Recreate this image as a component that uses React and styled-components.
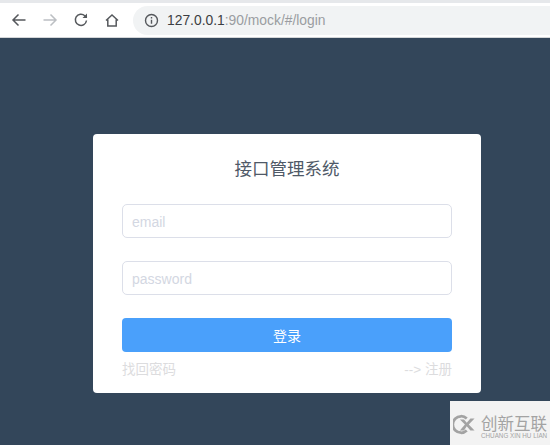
import React from "react";
import styled, { createGlobalStyle } from "styled-components";

const Global = createGlobalStyle`
  html, body { margin: 0; padding: 0; width: 550px; height: 445px; overflow: hidden; background: #34495e; }
  body { font-family: "Liberation Sans", "Noto Sans CJK SC", sans-serif; }
  * { box-sizing: border-box; }
`;

const Page = styled.div`
  position: relative;
  width: 550px;
  height: 445px;
  display: flex;
  flex-direction: column;
  background: #33465a;
`;

const Toolbar = styled.header`
  height: 38px;
  flex: none;
  display: flex;
  align-items: center;
  background: #fff;
  border-top: 3px solid #e6e8eb;
  border-bottom: 1px solid #d4d6d8;
  padding: 0 0 0 11px;
`;

const NavIcon = styled.svg`
  width: 16px;
  height: 16px;
  flex: none;
  margin-right: ${(p) => p.$gap}px;
  fill: none;
  stroke: ${(p) => p.$color};
  stroke-width: 1.5;
`;

const Omnibox = styled.div`
  width: 417px;
  height: 29px;
  flex: none;
  margin-left: 13px;
  border-radius: 15px 0 0 15px;
  background: #f1f3f4;
  display: flex;
  align-items: center;
  padding-left: 11px;
  gap: 8px;
  font-size: 13.85px;
`;

const InfoIcon = styled.svg`
  width: 15px;
  height: 15px;
  flex: none;
  fill: none;
  stroke: #55585c;
  stroke-width: 1.4;
`;

const Url = styled.span`
  color: #9a9da1;
`;

const Host = styled.span`
  color: #3b3e42;
`;

const Main = styled.main`
  flex: 1;
  padding: 96px 0 0 93px;
`;

const Card = styled.section`
  width: 388px;
  height: 259px;
  background: #fff;
  border-radius: 4px;
  padding: 25px 29px 0;
  display: flex;
  flex-direction: column;
`;

const Title = styled.h1`
  margin: 0 0 24px;
  height: 21px;
  font-size: 17.5px;
  line-height: 21px;
  font-weight: 400;
  text-align: center;
  color: #4f5967;
`;

const Field = styled.input`
  display: block;
  width: 100%;
  height: 34px;
  flex: none;
  margin-bottom: ${(p) => p.$gap}px;
  padding: 1px 9px 0;
  border: 1.5px solid #dcdfe9;
  border-radius: 5px;
  background: #fff;
  font: 14px "Liberation Sans", sans-serif;
  outline: none;
  &::placeholder { color: #d3d7e2; opacity: 1; }
`;

const Submit = styled.button`
  width: 100%;
  height: 34px;
  flex: none;
  border: 0;
  border-radius: 4px;
  background: #4aa0fb;
  color: #fff;
  font: 14px "Liberation Sans", "Noto Sans CJK SC", sans-serif;
`;

const Links = styled.div`
  display: flex;
  justify-content: space-between;
  margin-top: 8px;
  font-size: 13.5px;
  line-height: 19px;
  color: #dcdcde;
`;

const Watermark = styled.aside`
  position: absolute;
  left: 450px;
  top: 401px;
  width: 100px;
  height: 44px;
  background: #f3f3f3;
  display: flex;
  align-items: center;
  padding: 7px 0 0 3px;
  gap: 6px;
`;

const MarkIcon = styled.svg`
  width: 22px;
  height: 21px;
  flex: none;
  margin-top: -5px;
`;

const MarkText = styled.div`
  display: flex;
  flex-direction: column;
  color: #a3a3a3;
`;

const MarkCn = styled.span`
  font-size: 16.500px;
  line-height: 18px;
  white-space: nowrap;
`;

const MarkEn = styled.span`
  font-size: 6.300px;
  line-height: 6px;
  white-space: nowrap;
`;

export default function App() {
  return (
    <Page>
      <Global />
      <Toolbar>
        <NavIcon $gap={15} $color="#55585c" viewBox="0 0 16 16">
          <path d="M14.500 8H2M7.500 2.500 2 8l5.500 5.500" />
        </NavIcon>
        <NavIcon $gap={15} $color="#bcbfc3" viewBox="0 0 16 16">
          <path d="M1.500 8H14M8.500 2.500 14 8l-5.500 5.500" />
        </NavIcon>
        <NavIcon $gap={15} $color="#55585c" viewBox="0 0 16 16">
          <path d="M13.500 8.500A5.600 5.600 0 1 1 11.800 3.700L13.800 5.500" />
          <path d="M14 1.500v4.500H9.500" fill="#55585c" stroke="none" />
        </NavIcon>
        <NavIcon $gap={0} $color="#55585c" viewBox="0 0 16 16">
          <path d="M2 8.500 8 3l6 5.500M3.800 7.500V14h8.400V7.500" />
        </NavIcon>
        <Omnibox>
          <InfoIcon viewBox="0 0 15 15">
            <circle cx="7.500" cy="7.500" r="6" />
            <path d="M7.500 6.700v4M7.500 4v1.500" />
          </InfoIcon>
          <Url>
            <Host>127.0.0.1</Host>:90/mock/#/login
          </Url>
        </Omnibox>
      </Toolbar>
      <Main>
        <Card>
          <Title>接口管理系统</Title>
          <Field $gap={23} placeholder="email" />
          <Field $gap={23} placeholder="password" />
          <Submit>登录</Submit>
          <Links>
            <span>找回密码</span>
            <span>--&gt; 注册</span>
          </Links>
        </Card>
      </Main>
      <Watermark>
        <MarkIcon viewBox="0 0 24 22">
          <path d="M15 4.500A9 9 0 1 0 15 17.500" fill="none" stroke="#a3a3a3" strokeWidth="3" />
          <path d="M7.500 5.500h4.500l3 3.500 4-4.500h4.500l-6.300 6.500 6.300 6.500H19l-4-4.500-3 4.500H7.500l5.500-6.500z" fill="#a3a3a3" />
        </MarkIcon>
        <MarkText>
          <MarkCn>创新互联</MarkCn>
          <MarkEn>CHUANG XIN HU LIAN</MarkEn>
        </MarkText>
      </Watermark>
    </Page>
  );
}
